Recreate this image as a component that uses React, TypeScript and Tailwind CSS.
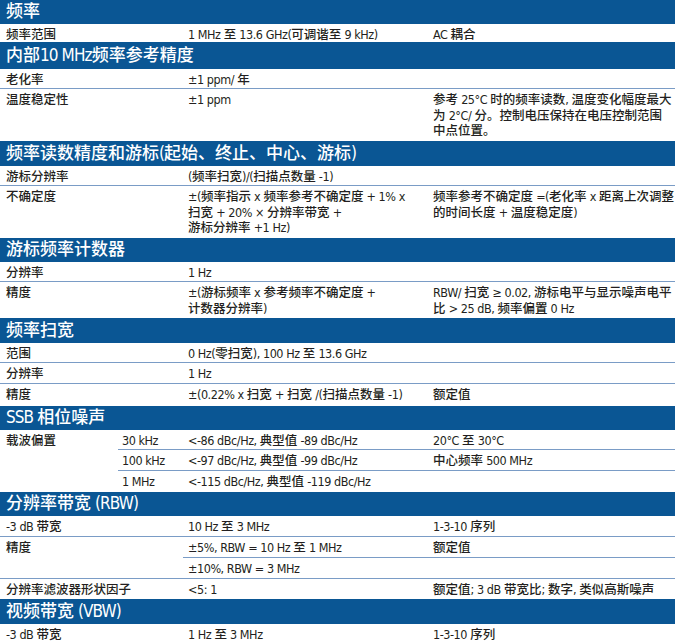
import React from "react";

const CJK = /([\u3000-\u303f\u4e00-\u9fff\uff00-\uffef]+)/;

const Txt = ({ s, head }: { s: string; head?: boolean }) => {
  const lines = s.split("\n");
  return (
    <>
      {lines.map((line, li) => (
        <React.Fragment key={li}>
          {li > 0 && <br />}
          {line
            .split(CJK)
            .filter((p) => p.length > 0)
            .map((p, i) =>
              CJK.test(p) ? (
                <span key={i} className="font-medium">
                  {p}
                </span>
              ) : (
                <span key={i} className={head ? "tracking-[-0.9px]" : "tracking-[-0.45px]"}>
                  {p}
                </span>
              )
            )}
        </React.Fragment>
      ))}
    </>
  );
};

const Header = ({ t, h }: { t: string; h: string }) => (
  <div className={`${h} bg-[#0a5694] text-white text-[17px] pl-[6px] flex items-center whitespace-nowrap`}>
    <div>
      <Txt s={t} head />
    </div>
  </div>
);

type RowProps = {
  a?: string;
  b?: string;
  c?: string;
  h: string;
  line?: boolean;
};

const Cell = ({ s, cls }: { s?: string; cls: string }) => (
  <div className={`${cls} pt-[3px] whitespace-nowrap`}>{s ? <Txt s={s} /> : null}</div>
);

const Row = ({ a, b, c, h, line }: RowProps) => (
  <div className={`grid grid-cols-[183px_245px_1fr] ${h} ${line ? "border-b border-[#7a9cc6]" : ""}`}>
    <Cell s={a} cls="pl-[6px]" />
    <Cell s={b} cls="pl-[5px]" />
    <Cell s={c} cls="pl-[5px]" />
  </div>
);

export default function App() {
  return (
    <div className="w-[675px] bg-white text-[#231f20] text-[12.5px] leading-[15.5px] font-stretch-condensed font-['DejaVu_Sans_Condensed','Liberation_Sans_Narrow','Noto_Sans_CJK_SC',sans-serif]">
      <Header t="频率" h="h-[24px]" />
      <Row h="h-[18px]" a="频率范围" b="1 MHz 至 13.6 GHz(可调谐至 9 kHz)" c="AC 耦合" />
      <Header t="内部10 MHz频率参考精度" h="h-[27px]" />
      <Row h="h-[20px]" line a="老化率" b="±1 ppm/ 年" />
      <Row
        h="h-[52px]"
        a="温度稳定性"
        b="±1 ppm"
        c={"参考 25°C 时的频率读数, 温度变化幅度最大\n为 2°C/ 分。控制电压保持在电压控制范围\n中点位置。"}
      />
      <Header t="频率读数精度和游标(起始、终止、中心、游标)" h="h-[25px]" />
      <Row h="h-[20px]" line a="游标分辨率" b="(频率扫宽)/(扫描点数量 -1)" />
      <Row
        h="h-[52px]"
        a="不确定度"
        b={"±(频率指示 x 频率参考不确定度 + 1% x\n扫宽 + 20% × 分辨率带宽 +\n游标分辨率 +1 Hz)"}
        c={"频率参考不确定度 =(老化率 x 距离上次调整\n的时间长度 + 温度稳定度)"}
      />
      <Header t="游标频率计数器" h="h-[24px]" />
      <Row h="h-[20px]" line a="分辨率" b="1 Hz" />
      <Row
        h="h-[36px]"
        a="精度"
        b={"±(游标频率 x 参考频率不确定度 +\n计数器分辨率)"}
        c={"RBW/ 扫宽 ≥ 0.02, 游标电平与显示噪声电平\n比 > 25 dB, 频率偏置 0 Hz"}
      />
      <Header t="频率扫宽" h="h-[25px]" />
      <Row h="h-[20px]" line a="范围" b="0 Hz(零扫宽), 100 Hz 至 13.6 GHz" />
      <Row h="h-[21px]" line a="分辨率" b="1 Hz" />
      <Row h="h-[22px]" a="精度" b="±(0.22% x 扫宽 + 扫宽 /(扫描点数量 -1)" c="额定值" />
      <Header t="SSB 相位噪声" h="h-[24px]" />
      <div className="grid grid-cols-[118px_65px_245px_1fr] grid-rows-[20px_21px_21px]">
        <Cell s="载波偏置" cls="row-span-3 pl-[6px]" />
        <Cell s="30 kHz" cls="pl-[4px] border-b border-[#7a9cc6]" />
        <Cell s="<-86 dBc/Hz, 典型值 -89 dBc/Hz" cls="pl-[5px] border-b border-[#7a9cc6]" />
        <Cell s="20°C 至 30°C" cls="pl-[5px] border-b border-[#7a9cc6]" />
        <Cell s="100 kHz" cls="pl-[4px] border-b border-[#7a9cc6]" />
        <Cell s="<-97 dBc/Hz, 典型值 -99 dBc/Hz" cls="pl-[5px] border-b border-[#7a9cc6]" />
        <Cell s="中心频率 500 MHz" cls="pl-[5px] border-b border-[#7a9cc6]" />
        <Cell s="1 MHz" cls="pl-[4px]" />
        <Cell s="<-115 dBc/Hz, 典型值 -119 dBc/Hz" cls="pl-[5px]" />
        <Cell cls="pl-[5px]" />
      </div>
      <Header t="分辨率带宽 (RBW)" h="h-[24px]" />
      <Row h="h-[21px]" line a="-3 dB 带宽" b="10 Hz 至 3 MHz" c="1-3-10 序列" />
      <div className="grid grid-cols-[183px_245px_1fr] grid-rows-[21px_20px] border-b border-[#7a9cc6]">
        <Cell s="精度" cls="row-span-2 pl-[6px]" />
        <Cell s="±5%, RBW = 10 Hz 至 1 MHz" cls="pl-[5px] border-b border-[#7a9cc6]" />
        <Cell s="额定值" cls="pl-[5px] border-b border-[#7a9cc6]" />
        <Cell s="±10%, RBW = 3 MHz" cls="pl-[5px]" />
        <Cell cls="pl-[5px]" />
      </div>
      <Row h="h-[20px]" a="分辨率滤波器形状因子" b="<5: 1" c="额定值; 3 dB 带宽比; 数字, 类似高斯噪声" />
      <Header t="视频带宽 (VBW)" h="h-[25px]" />
      <Row h="h-[20px]" a="-3 dB 带宽" b="1 Hz 至 3 MHz" c="1-3-10 序列" />
    </div>
  );
}
